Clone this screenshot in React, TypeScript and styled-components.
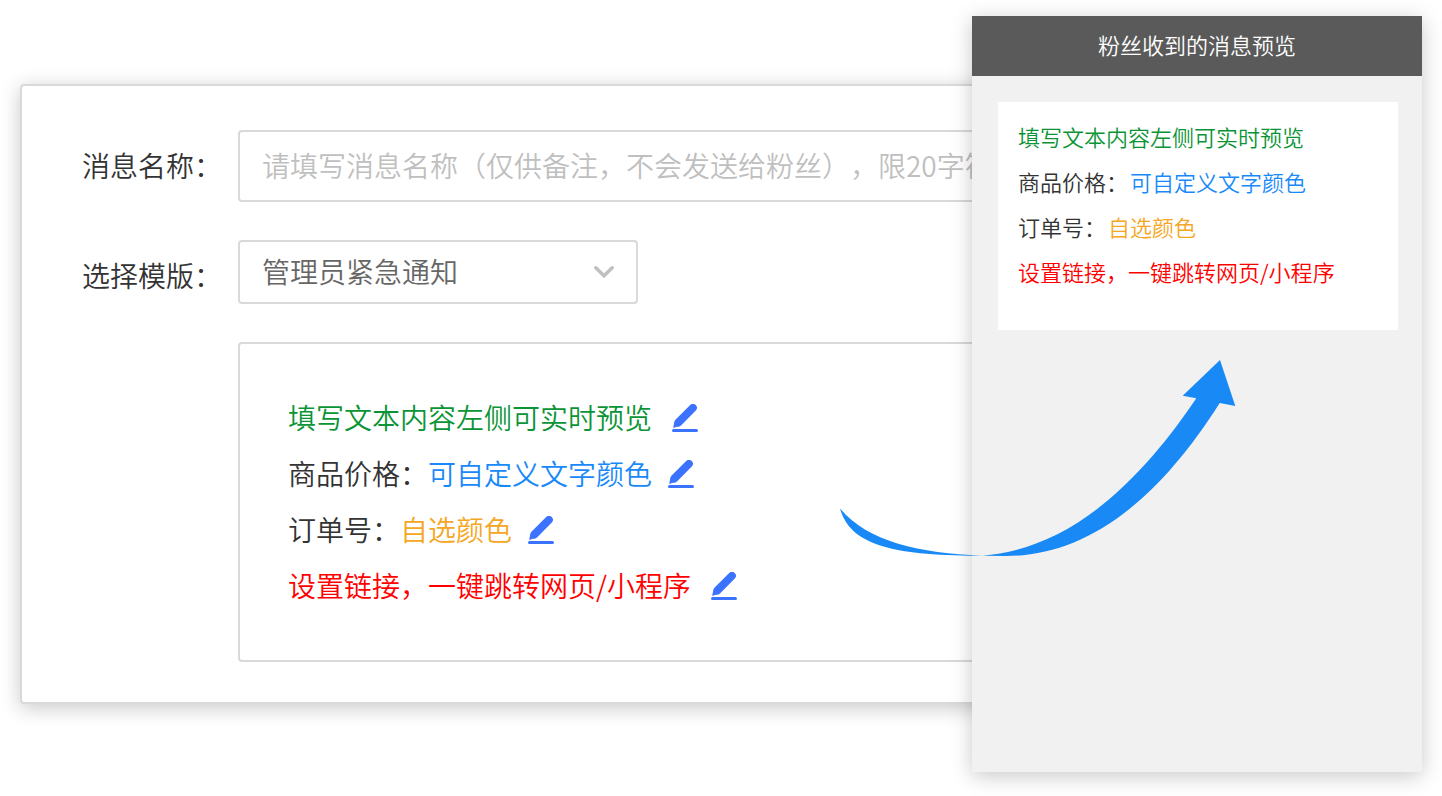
import React from "react";
import styled, { createGlobalStyle } from "styled-components";

const GlobalStyle = createGlobalStyle`
  *, *::before, *::after { box-sizing: border-box; }
  body {
    margin: 0;
    background: #fff;
    color: #333;
    font-family: "Noto Sans CJK SC", "Liberation Sans", sans-serif;
    font-weight: 350;
    text-spacing-trim: space-all;
  }
`;

const Page = styled.main`
  display: flex;
  align-items: flex-start;
  min-height: 100vh;
  padding: 16px 20px 24px;
  overflow: hidden;
`;

const FormCard = styled.form`
  flex: 1;
  min-width: 0;
  display: flex;
  flex-direction: column;
  gap: 38px;
  margin: 68px -100px 0 0;
  padding: 44px 40px 40px 60px;
  background: #fff;
  border: 2px solid #d9d9d9;
  border-radius: 4px;
  box-shadow: 0 4px 20px rgba(0, 0, 0, 0.22);
`;

const Row = styled.div`
  display: flex;
  align-items: flex-start;
`;

const Label = styled.label`
  flex: none;
  width: 156px;
  padding-top: 15px;
  font-size: 28px;
  line-height: 40px;
`;

const TextInput = styled.input`
  flex: 1;
  min-width: 0;
  height: 72px;
  padding: 0 22px 2px;
  border: 2px solid #d9d9d9;
  border-radius: 4px;
  background: #fff;
  color: #666;
  font: inherit;
  font-size: 28px;
  text-spacing-trim: inherit;
  &::placeholder { color: #bfbfbf; opacity: 1; }
`;

const SelectWrap = styled.div`
  position: relative;
  width: 400px;
`;

const Select = styled.select`
  display: block;
  appearance: none;
  width: 100%;
  height: 64px;
  padding: 0 60px 2px 22px;
  border: 2px solid #d9d9d9;
  border-radius: 4px;
  background: #fff;
  color: #666;
  font: inherit;
  font-size: 28px;
`;

const Chevron = styled.svg`
  position: absolute;
  top: 26px;
  right: 24px;
  pointer-events: none;
`;

const Editor = styled.section`
  flex: 1;
  min-width: 0;
  margin-left: 156px;
  padding: 46px 48px;
  border: 2px solid #d9d9d9;
  border-radius: 4px;
`;

const EditorLine = styled.div<{ $gap: number }>`
  display: flex;
  align-items: center;
  gap: ${(p) => p.$gap}px;
`;

const EditorText = styled.span`
  padding-bottom: 2px;
  font-size: 28px;
  line-height: 54px;
  white-space: nowrap;
`;

const Colored = styled.span<{ $color: string }>`
  color: ${(p) => p.$color};
`;

const EditButton = styled.button`
  display: flex;
  padding: 0;
  border: 0;
  background: none;
  color: #3b73ff;
  cursor: pointer;
`;

const Preview = styled.aside`
  position: relative;
  flex: none;
  width: 450px;
  min-height: 756px;
  background: #f1f1f1;
  box-shadow: 0 4px 20px rgba(0, 0, 0, 0.22);
`;

const PreviewTitle = styled.h2`
  margin: 0;
  padding-bottom: 4px;
  background: #5a5a5a;
  color: #fff;
  font-size: 22px;
  font-weight: 350;
  line-height: 56px;
  text-align: center;
`;

const Message = styled.div`
  margin: 26px 24px 0 26px;
  padding: 12px 20px 36px;
  background: #fff;
`;

const MessageLine = styled.p`
  display: flex;
  gap: 2px;
  margin: 0;
  font-size: 22px;
  line-height: 45px;
  white-space: nowrap;
`;

const Arrow = styled.svg`
  position: absolute;
  top: 344px;
  left: -132px;
  pointer-events: none;
`;

type Line = { label?: string; text: string; color: string; gap: number };

const lines: Line[] = [
  { text: "填写文本内容左侧可实时预览", color: "#0b9436", gap: 20 },
  { label: "商品价格：", text: "可自定义文字颜色", color: "#1989fa", gap: 16 },
  { label: "订单号：", text: "自选颜色", color: "#f5a623", gap: 16 },
  { text: "设置链接，一键跳转网页/小程序", color: "#ff0000", gap: 20 },
];

const PencilIcon = () => (
  <svg width="26" height="28" viewBox="0 0 26 28" fill="currentColor" aria-hidden="true">
    <path d="M18.2 1.1 A3.8 3.8 0 0 1 23.8 6.5 L9 21.6 C7.2 23.2 4.6 22.8 2.2 23.7 C1.5 24 1.1 23.5 1.3 22.9 C2.2 20.4 1.8 17.4 3.4 15.7 Z" />
    <rect x="0" y="25" width="26" height="3" rx="1.5" />
  </svg>
);

export default function App() {
  return (
    <>
      <GlobalStyle />
      <Page>
        <FormCard>
          <Row>
            <Label htmlFor="message-name">消息名称：</Label>
            <TextInput
              id="message-name"
              type="text"
              placeholder="请填写消息名称（仅供备注，不会发送给粉丝），限20字符"
            />
          </Row>
          <Row>
            <Label htmlFor="template">选择模版：</Label>
            <SelectWrap>
              <Select id="template" defaultValue="urgent">
                <option value="urgent">管理员紧急通知</option>
              </Select>
              <Chevron width="20" height="12" viewBox="0 0 20 12" fill="none" aria-hidden="true">
                <path d="M1.8 1.8 L10 9.8 L18.2 1.8" stroke="#bfbfbf" strokeWidth="3.4" strokeLinecap="round" />
              </Chevron>
            </SelectWrap>
          </Row>
          <Editor aria-label="消息内容">
            {lines.map((line) => (
              <EditorLine key={line.text} $gap={line.gap}>
                <EditorText>
                  {line.label}
                  <Colored $color={line.color}>{line.text}</Colored>
                </EditorText>
                <EditButton type="button" aria-label="编辑">
                  <PencilIcon />
                </EditButton>
              </EditorLine>
            ))}
          </Editor>
        </FormCard>
        <Preview>
          <PreviewTitle>粉丝收到的消息预览</PreviewTitle>
          <Message>
            {lines.map((line) => (
              <MessageLine key={line.text}>
                {line.label && <span>{line.label}</span>}
                <Colored $color={line.color}>{line.text}</Colored>
              </MessageLine>
            ))}
          </Message>
          <Arrow width="396" height="198" viewBox="0 0 396 198" fill="#1989f5" aria-hidden="true">
            <path d="M0 148.5 C10 184 50 196 142 195.7 C80 193 28 182 0 148.5 Z" />
            <path d="M142 195.7 C215 190 285 144 356.3 38.3 L342.7 35.7 L380 0 L395.3 46 L379.7 43 C312 150 240 196 166 196 Z" />
          </Arrow>
        </Preview>
      </Page>
    </>
  );
}
